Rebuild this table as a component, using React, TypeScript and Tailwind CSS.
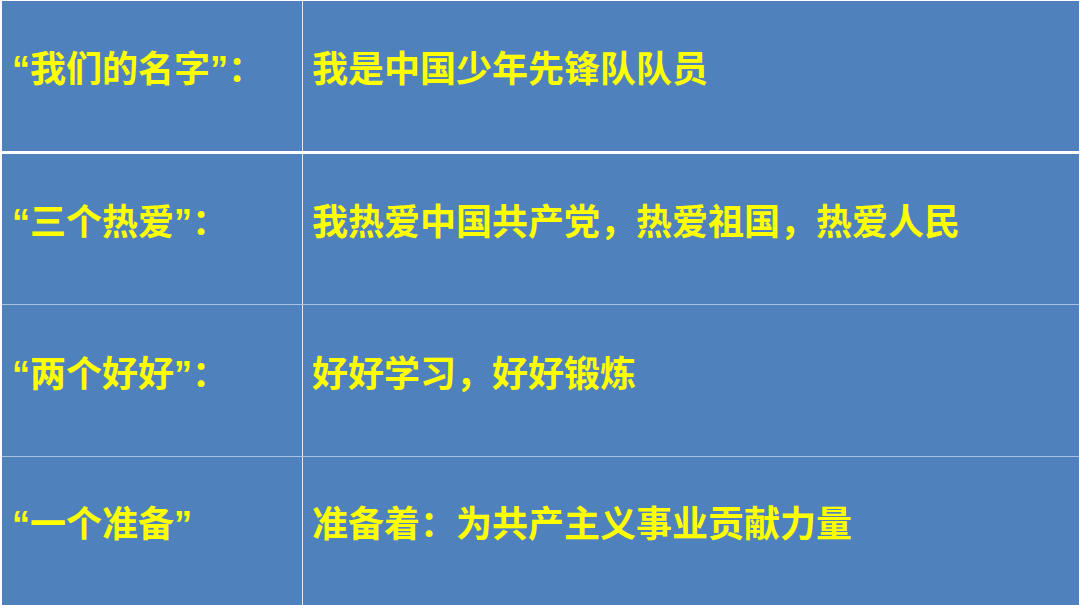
import React from "react";

const rows = [
  { label: "“我们的名字”：", text: "我是中国少年先锋队队员", cls: "h-[153px] border-b-[3px] border-white" },
  { label: "“三个热爱”：", text: "我热爱中国共产党，热爱祖国，热爱人民", cls: "h-[151px] border-b border-[#a9c0de]" },
  { label: "“两个好好”：", text: "好好学习，好好锻炼", cls: "h-[152px] border-b border-[#a9c0de]" },
  { label: "“一个准备”", text: "准备着：为共产主义事业贡献力量", cls: "flex-1" },
];

export default function App() {
  return (
    <div
      className="w-[1080px] h-[605px] overflow-hidden bg-white pl-[2px] pt-px pr-px"
      style={{ fontFamily: '"Liberation Sans", "Noto Sans CJK SC", sans-serif' }}
    >
      <div className="flex flex-col h-full bg-[#4f81bd]">
        {rows.map((r, i) => (
          <div key={i} className={`flex shrink-0 ${r.cls}`}>
            <div className="w-[301px] shrink-0 border-r border-[#dfe8f3] flex items-center pl-[10px] pb-[12px]">
              <span className="text-[36px] leading-none font-bold text-[#ffff00] whitespace-nowrap">
                {r.label}
              </span>
            </div>
            <div className="flex-1 flex items-center pl-[9px] pb-[12px]">
              <span className="text-[36px] leading-none font-bold text-[#ffff00] whitespace-nowrap">
                {r.text}
              </span>
            </div>
          </div>
        ))}
      </div>
    </div>
  );
}
